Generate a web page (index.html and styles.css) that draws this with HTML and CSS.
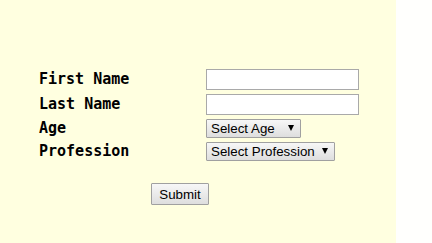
FILE: index.html
```html
<!DOCTYPE html>
<html lang="en">
<head>
  <meta charset="UTF-8">
  <meta name="viewport" content="width=device-width, initial-scale=1.0">
  <title>Sign Up</title>
  <link rel="stylesheet" href="styles.css">
</head>
<body>
  <div class="page">
    <form id="signupForm" class="signup">
      <div class="fields">
        <label for="firstName">First Name</label>
        <input type="text" id="firstName" name="firstName">

        <label for="lastName">Last Name</label>
        <input type="text" id="lastName" name="lastName">

        <label for="age">Age</label>
        <span class="select age">
          <select id="age" name="age">
            <option value="">Select Age</option>
            <option value="18-25">18 - 25</option>
            <option value="26-40">26 - 40</option>
            <option value="41+">41 +</option>
          </select>
        </span>

        <label for="profession">Profession</label>
        <span class="select profession">
          <select id="profession" name="profession">
            <option value="">Select Profession</option>
            <option value="student">Student</option>
            <option value="engineer">Engineer</option>
            <option value="teacher">Teacher</option>
          </select>
        </span>
      </div>

      <div class="actions">
        <button type="submit">Submit</button>
      </div>
    </form>
  </div>
</body>
</html>
```

FILE: styles.css
```css
body {
  margin: 0;
  background-color: #fffffd;
  font-family: "Liberation Sans", Arial, sans-serif;
}
.page {
  width: 396px;
  min-height: 100vh;
  background-color: #ffffe0;
  padding: 69px 0 0 39px;
  box-sizing: border-box;
}
.fields {
  display: grid;
  grid-template-columns: 167px auto;
  row-gap: 4px;
  align-items: center;
  justify-items: start;
}
label {
  font-family: "DejaVu Sans Mono", monospace;
  font-weight: bold;
  font-size: 15px;
  line-height: 16px;
  margin-top: -1px;
  color: #000;
}
input {
  width: 153px;
  height: 21px;
  margin: 0;
  padding: 1px 3px;
  border: 1px solid #a9a9a9;
  background: #fff;
  box-sizing: border-box;
  font-size: 13px;
}
.select {
  position: relative;
  display: block;
}
.select::after {
  content: "";
  position: absolute;
  top: 6px;
  right: 7px;
  border-left: 3px solid transparent;
  border-right: 3px solid transparent;
  border-top: 6px solid #000;
  pointer-events: none;
}
select, button {
  -webkit-appearance: none;
  appearance: none;
  margin: 0;
  border: 1px solid #a0a0a0;
  border-radius: 1px;
  background: linear-gradient(#f7f7f7, #dedede);
  color: #000;
  font-family: "Liberation Sans", Arial, sans-serif;
  font-size: 13.33px;
  box-sizing: border-box;
}
select {
  display: block;
  height: 19px;
  padding: 0 0 0 4px;
  line-height: 17px;
}
.age select {
  width: 95px;
}
.profession select {
  width: 129px;
}
.actions {
  padding: 22px 0 0 112px;
}
button {
  width: 58px;
  height: 22px;
  padding: 0;
  cursor: pointer;
}
button:hover {
  background: linear-gradient(#fbfbfb, #e6e6e6);
}
```
